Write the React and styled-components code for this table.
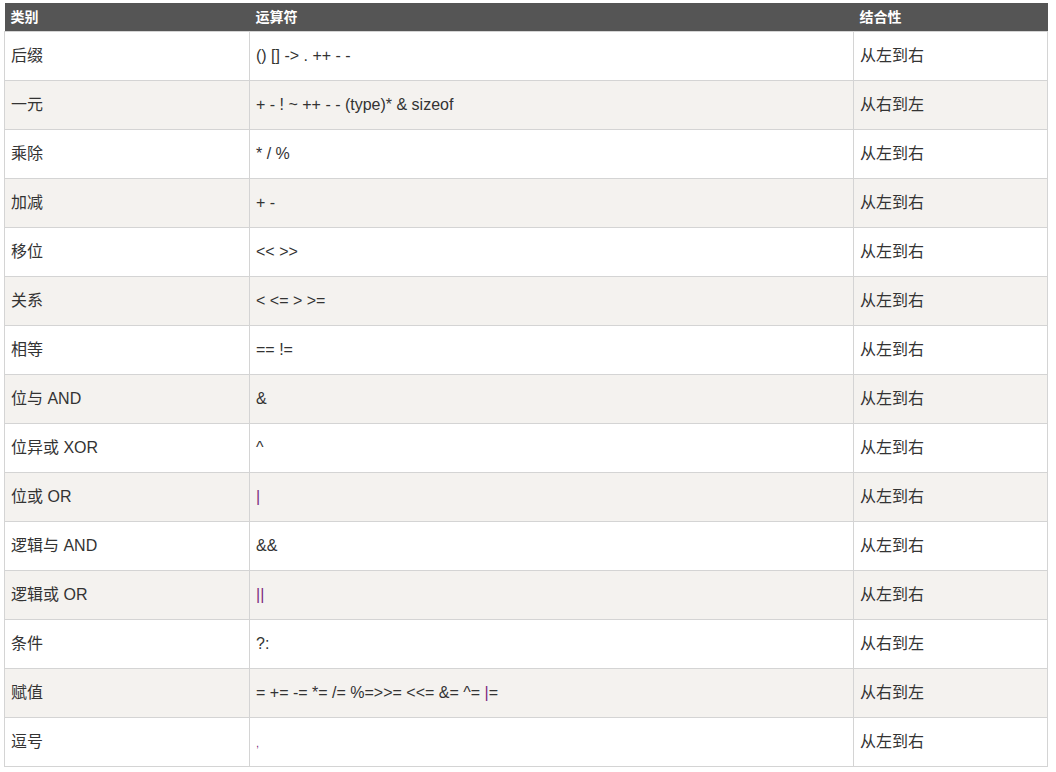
import React from "react";
import styled, { createGlobalStyle } from "styled-components";

const Global = createGlobalStyle`
  html, body { margin: 0; padding: 0; background: #fff; }
  body { font-family: "Liberation Sans", "Noto Sans CJK SC", Arial, sans-serif; }
`;

const Page = styled.div`
  padding: 3px 9px 0 4px;
`;

const Table = styled.table`
  width: 1043px;
  border-collapse: collapse;
  table-layout: fixed;
  color: #333;
  font-size: 16px;
`;

const Col = styled.col`
  width: ${(p) => p.$w}px;
`;

const Th = styled.th`
  background: #555555;
  color: #fff;
  font-size: 14px;
  font-weight: bold;
  text-align: left;
  height: 28px;
  padding: 0 6px;
  line-height: 28px;
  border: none;
`;

const Tr = styled.tr`
  background: ${(p) => (p.$alt ? "#f4f2ef" : "#fff")};
`;

const Td = styled.td`
  border: 1px solid #d4d4d4;
  height: 49px;
  box-sizing: border-box;
  padding: 0 6px;
  vertical-align: middle;
  line-height: 20px;
  white-space: nowrap;
`;

const Pipe = styled.span`
  color: #7d2a7d;
  font-size: ${(p) => (p.$small ? "11px" : "inherit")};
`;

const rows = [
  ["后缀", "() [] -> . ++ - -", "从左到右"],
  ["一元", "+ - ! ~ ++ - - (type)* & sizeof", "从右到左"],
  ["乘除", "* / %", "从左到右"],
  ["加减", "+ -", "从左到右"],
  ["移位", "<< >>", "从左到右"],
  ["关系", "< <= > >=", "从左到右"],
  ["相等", "== !=", "从左到右"],
  ["位与 AND", "&", "从左到右"],
  ["位异或 XOR", "^", "从左到右"],
  ["位或 OR", <Pipe>|</Pipe>, "从左到右"],
  ["逻辑与 AND", "&&", "从左到右"],
  ["逻辑或 OR", <Pipe>||</Pipe>, "从左到右"],
  ["条件", "?:", "从右到左"],
  ["赋值", <>= += -= *= /= %=&gt;&gt;= &lt;&lt;= &amp;= ^= <Pipe>|</Pipe>=</>, "从右到左"],
  ["逗号", <Pipe $small>,</Pipe>, "从左到右"],
];

export default function App() {
  return (
    <>
      <Global />
      <Page>
        <Table>
          <colgroup>
            <Col $w={245} />
            <Col $w={604} />
            <Col $w={194} />
          </colgroup>
          <thead>
            <tr>
              <Th>类别</Th>
              <Th>运算符</Th>
              <Th>结合性</Th>
            </tr>
          </thead>
          <tbody>
            {rows.map((r, i) => (
              <Tr key={i} $alt={i % 2 === 1}>
                <Td>{r[0]}</Td>
                <Td>{r[1]}</Td>
                <Td>{r[2]}</Td>
              </Tr>
            ))}
          </tbody>
        </Table>
      </Page>
    </>
  );
}
